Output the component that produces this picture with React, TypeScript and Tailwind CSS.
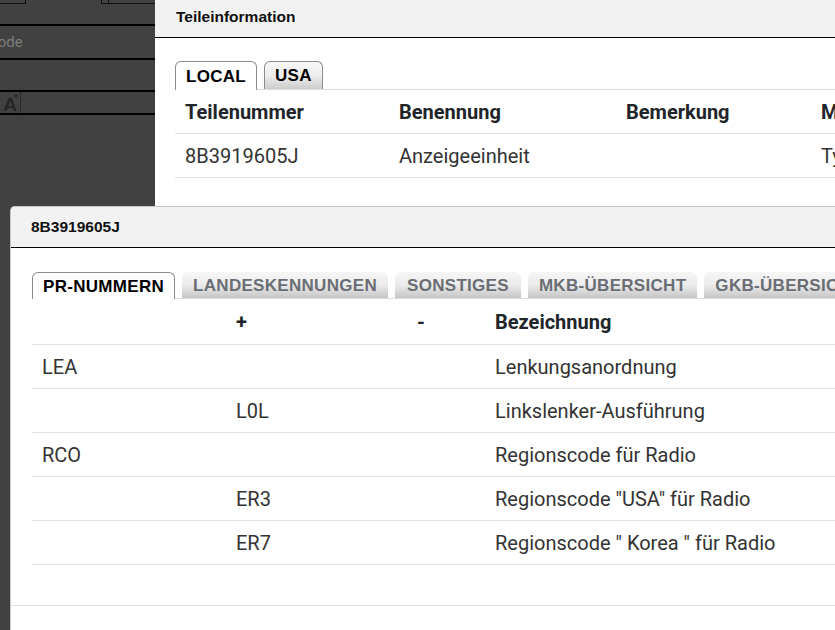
import { ReactNode } from "react";

type TabProps = { label: string; active?: boolean; muted?: boolean; className?: string };

const Tab = ({ label, active, muted, className = "" }: TabProps) => (
  <div
    className={`flex items-center shrink-0 rounded-t-[6px] text-[17px] font-bold leading-none tracking-[0.3px] ${
      active
        ? "bg-white border border-b-0 border-[#8c8c8c] text-black -mb-px relative z-10"
        : muted
        ? "bg-gradient-to-b from-[#f6f6f6] via-[#ebebeb] to-[#c6c6c6] text-[#6a6e74]"
        : "bg-gradient-to-b from-[#f8f8f8] via-[#ededed] to-[#cdcdcd] border border-b-0 border-[#8c8c8c] text-black"
    } ${className}`}
  >
    {label}
  </div>
);

const Cell = ({ children, bold }: { children?: ReactNode; bold?: boolean }) => (
  <div className={`pl-[10px] flex items-center whitespace-nowrap ${bold ? "font-bold text-[#212529]" : "text-[#333]"}`}>
    {children}
  </div>
);

const prRows = [
  ["LEA", "", "", "Lenkungsanordnung"],
  ["", "L0L", "", "Linkslenker-Ausführung"],
  ["RCO", "", "", "Regionscode für Radio"],
  ["", "ER3", "", 'Regionscode "USA" für Radio'],
  ["", "ER7", "", 'Regionscode " Korea " für Radio'],
];

const Sidebar = () => (
  <div className="w-[155px] shrink-0 bg-[#414141] flex flex-col overflow-hidden font-['Roboto',sans-serif]">
    <div className="h-[26px] shrink-0 border-b-2 border-black relative">
      <div className="absolute left-0 top-0 w-[26px] h-[4px] border-r border-b border-[#111]" />
      <div className="absolute left-[101px] top-0 w-[54px] h-[4px] border-l border-b border-[#111]">
        <div className="ml-[6px] h-full border-l border-[#111]" />
      </div>
    </div>
    <div className="h-[34px] shrink-0 border-b-2 border-black flex items-center overflow-hidden">
      <span className="text-[15px] text-[#7c7c7c] -ml-[64px] whitespace-nowrap">Regionscode</span>
    </div>
    <div className="h-[32px] shrink-0 border-b-2 border-black" />
    <div className="h-[23px] shrink-0 border-b-2 border-black flex">
      <div className="w-[21px] border-r border-[#2c2c2c] flex items-end justify-center relative">
        <span className="text-[19px] leading-none font-bold text-[#262626] font-['Liberation_Sans',sans-serif] -mb-px">A</span>
        <span className="absolute right-[2px] top-[3px] w-0 h-0 border-l-[2px] border-r-[2px] border-t-[3px] border-l-transparent border-r-transparent border-t-[#262626]" />
      </div>
    </div>
  </div>
);

const PartPanel = () => (
  <div className="flex-1 bg-white flex flex-col overflow-hidden">
    <div className="h-[38px] shrink-0 bg-[#f2f2f2] border-b border-black flex items-center pl-[21px] pb-[4px] text-[15.5px] font-bold text-[#111] font-['Liberation_Sans',sans-serif]">
      Teileinformation
    </div>
    <div className="pl-[20px] pt-[23px] font-['Liberation_Sans',sans-serif]">
      <div className="flex gap-[7px] border-b border-[#dcdcdc]">
        <Tab label="LOCAL" active className="h-[29px] px-[10px]" />
        <Tab label="USA" className="h-[28px] px-[10px]" />
      </div>
    </div>
    <div className="pl-[20px] font-['Roboto',sans-serif] text-[20px]">
      <div className="w-[900px] grid grid-cols-[214px_227px_195px_1fr]">
        {["Teilenummer", "Benennung", "Bemerkung", "Menge"].map((h) => (
          <div key={h} className="h-[44px] border-b border-[#dee2e6] flex">
            <Cell bold>{h}</Cell>
          </div>
        ))}
        {["8B3919605J", "Anzeigeeinheit", "", "Typ"].map((v, i) => (
          <div key={i} className="h-[44px] border-b border-[#dee2e6] flex">
            <Cell>{v}</Cell>
          </div>
        ))}
      </div>
    </div>
  </div>
);

const PrDialog = () => (
  <div className="absolute left-[10px] top-[206px] right-0 bottom-0 bg-white rounded-tl-[5px] border-t border-l border-[#c8c8c8] flex flex-col overflow-hidden">
    <div className="h-[41px] shrink-0 bg-[#f2f2f2] border-b border-black flex items-center pl-[20px] text-[15.5px] font-bold text-[#111] font-['Liberation_Sans',sans-serif]">
      8B3919605J
    </div>
    <div className="pl-[21px] pt-[24px] font-['Liberation_Sans',sans-serif]">
      <div className="flex gap-[7px] border-b border-[#dcdcdc] w-[900px]">
        <Tab label="PR-NUMMERN" active className="h-[27px] px-[10px]" />
        <Tab label="LANDESKENNUNGEN" muted className="h-[26px] px-[11px]" />
        <Tab label="SONSTIGES" muted className="h-[26px] px-[12px]" />
        <Tab label="MKB-ÜBERSICHT" muted className="h-[26px] px-[11px]" />
        <Tab label="GKB-ÜBERSICHT" muted className="h-[26px] px-[11px]" />
      </div>
    </div>
    <div className="pl-[21px] font-['Roboto',sans-serif] text-[20px]">
      <div className="w-[900px] grid grid-cols-[194px_181px_78px_1fr]">
        {["", "+", "-", "Bezeichnung"].map((h, i) => (
          <div key={i} className="h-[46px] border-b border-[#dee2e6] flex">
            <Cell bold>{h}</Cell>
          </div>
        ))}
        {prRows.map((row, r) =>
          row.map((v, c) => (
            <div key={`${r}-${c}`} className="h-[44px] border-b border-[#dee2e6] flex">
              <Cell>{v}</Cell>
            </div>
          ))
        )}
      </div>
    </div>
    <div className="mt-[40px] border-t border-[#dee2e6] flex-1" />
  </div>
);

export default function App() {
  return (
    <div className="w-[835px] h-[630px] relative overflow-hidden bg-[#414141] flex">
      <Sidebar />
      <PartPanel />
      <PrDialog />
    </div>
  );
}
